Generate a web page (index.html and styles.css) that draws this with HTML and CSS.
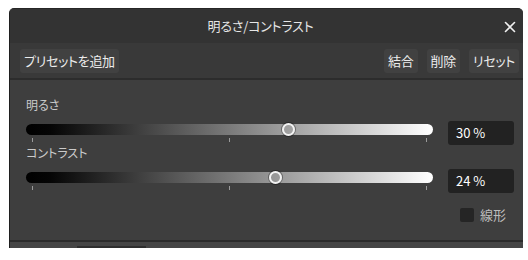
FILE: index.html
```html
<!DOCTYPE html>
<html lang="ja">
<head>
<meta charset="utf-8">
<link rel="stylesheet" href="styles.css">
</head>
<body>
<div class="panel">
  <div class="titlebar">
    <span class="title">明るさ/コントラスト</span>
    <svg class="close" width="12" height="12" viewBox="0 0 12 12"><path d="M1.5 1.5 L10.5 10.5 M10.5 1.5 L1.5 10.5" stroke="#f0f0f0" stroke-width="1.6" stroke-linecap="round"/></svg>
  </div>
  <div class="toolbar">
    <span class="btn">プリセットを追加</span>
    <span class="spacer"></span>
    <span class="btn">結合</span>
    <span class="btn">削除</span>
    <span class="btn">リセット</span>
  </div>
  <div class="content">
    <div class="label">明るさ</div>
    <div class="row">
      <div class="slider">
        <div class="track"><span class="thumb" style="left: 64.6%"></span></div>
        <div class="ticks"><i></i><i></i><i></i></div>
      </div>
      <div class="value">30 %</div>
    </div>
    <div class="label">コントラスト</div>
    <div class="row">
      <div class="slider">
        <div class="track"><span class="thumb" style="left: 61.4%"></span></div>
        <div class="ticks"><i></i><i></i><i></i></div>
      </div>
      <div class="value">24 %</div>
    </div>
    <div class="check-row">
      <span class="checkbox"></span>
      <span class="check-label">線形</span>
    </div>
  </div>
  <div class="footer"><span class="tab"></span></div>
</div>
</body>
</html>
```
FILE: styles.css
```css
* { box-sizing: border-box; }
html, body { margin: 0; padding: 0; background: #ffffff; }
body {
  font-family: "Noto Sans CJK JP", "Noto Sans", sans-serif;
  font-feature-settings: "palt";
}
.panel {
  margin: 8px 0 0 9px;
  width: 514px;
  border-left: 1px solid #1f1f1f;
  border-top: 1px solid #262626;
  border-radius: 5px 5px 0 0;
  overflow: hidden;
  background: #3d3d3d;
}
.titlebar {
  height: 34px;
  background: #333333;
  display: flex;
  align-items: center;
  justify-content: center;
  position: relative;
}
.title {
  color: #e6e6e6;
  font-size: 13px;
  line-height: 16px;
  margin-left: -12px;
  letter-spacing: -0.2px;
}
.close {
  position: absolute;
  right: 7px;
  top: 12px;
}
.toolbar {
  height: 37px;
  background: #393939;
  display: flex;
  align-items: center;
  padding: 0 4px 0 10px;
  gap: 9px;
  border-bottom: 2px solid #2c2c2c;
}
.spacer { flex: 1; }
.btn {
  background: #414141;
  color: #ececec;
  font-size: 13px;
  line-height: 24px;
  height: 24px;
  padding: 0 4px;
  border-radius: 3px;
  letter-spacing: -0.3px;
}
.content {
  height: 160px;
  padding: 17px 9px 0 16px;
  background: #3e3e3e;
}
.label {
  color: #cacaca;
  font-size: 12px;
  line-height: 16px;
}
.row {
  display: flex;
  align-items: flex-start;
  gap: 15px;
  margin-top: 8px;
  height: 24px;
}
.slider {
  width: 407px;
  padding-top: 3px;
}
.track {
  height: 11px;
  border-radius: 6px;
  background: linear-gradient(to right, #000000 0%, #050505 6%, #ffffff 100%);
  position: relative;
}
.thumb {
  position: absolute;
  top: -1px;
  width: 13px;
  height: 13px;
  margin-left: -6.5px;
  border-radius: 50%;
  border: 2px solid #f2f2f2;
  box-shadow: 0 0 0 1px rgba(0,0,0,0.35);
  background: transparent;
}
.ticks {
  display: flex;
  justify-content: space-between;
  padding: 0 6px;
  margin-top: 3px;
  height: 4px;
}
.ticks i {
  display: block;
  width: 1px;
  height: 4px;
  background: #9a9a9a;
}
.value {
  width: 66px;
  height: 24px;
  background: #222222;
  border-radius: 3px;
  color: #ffffff;
  font-size: 13px;
  line-height: 24px;
  padding-left: 8px;
}
.check-row {
  display: flex;
  justify-content: flex-end;
  align-items: center;
  gap: 6px;
  margin-top: 14px;
  padding-right: 8px;
}
.checkbox {
  width: 14px;
  height: 14px;
  background: #252525;
  border-radius: 2px;
}
.check-label {
  color: #bdbdbd;
  font-size: 13px;
  line-height: 16px;
}
.footer {
  height: 8px;
  border-top: 2px solid #2b2b2b;
  background: #454545;
  position: relative;
}
.tab {
  position: absolute;
  left: 67px;
  bottom: 0;
  width: 69px;
  height: 2px;
  background: #2e2e2e;
}
```
